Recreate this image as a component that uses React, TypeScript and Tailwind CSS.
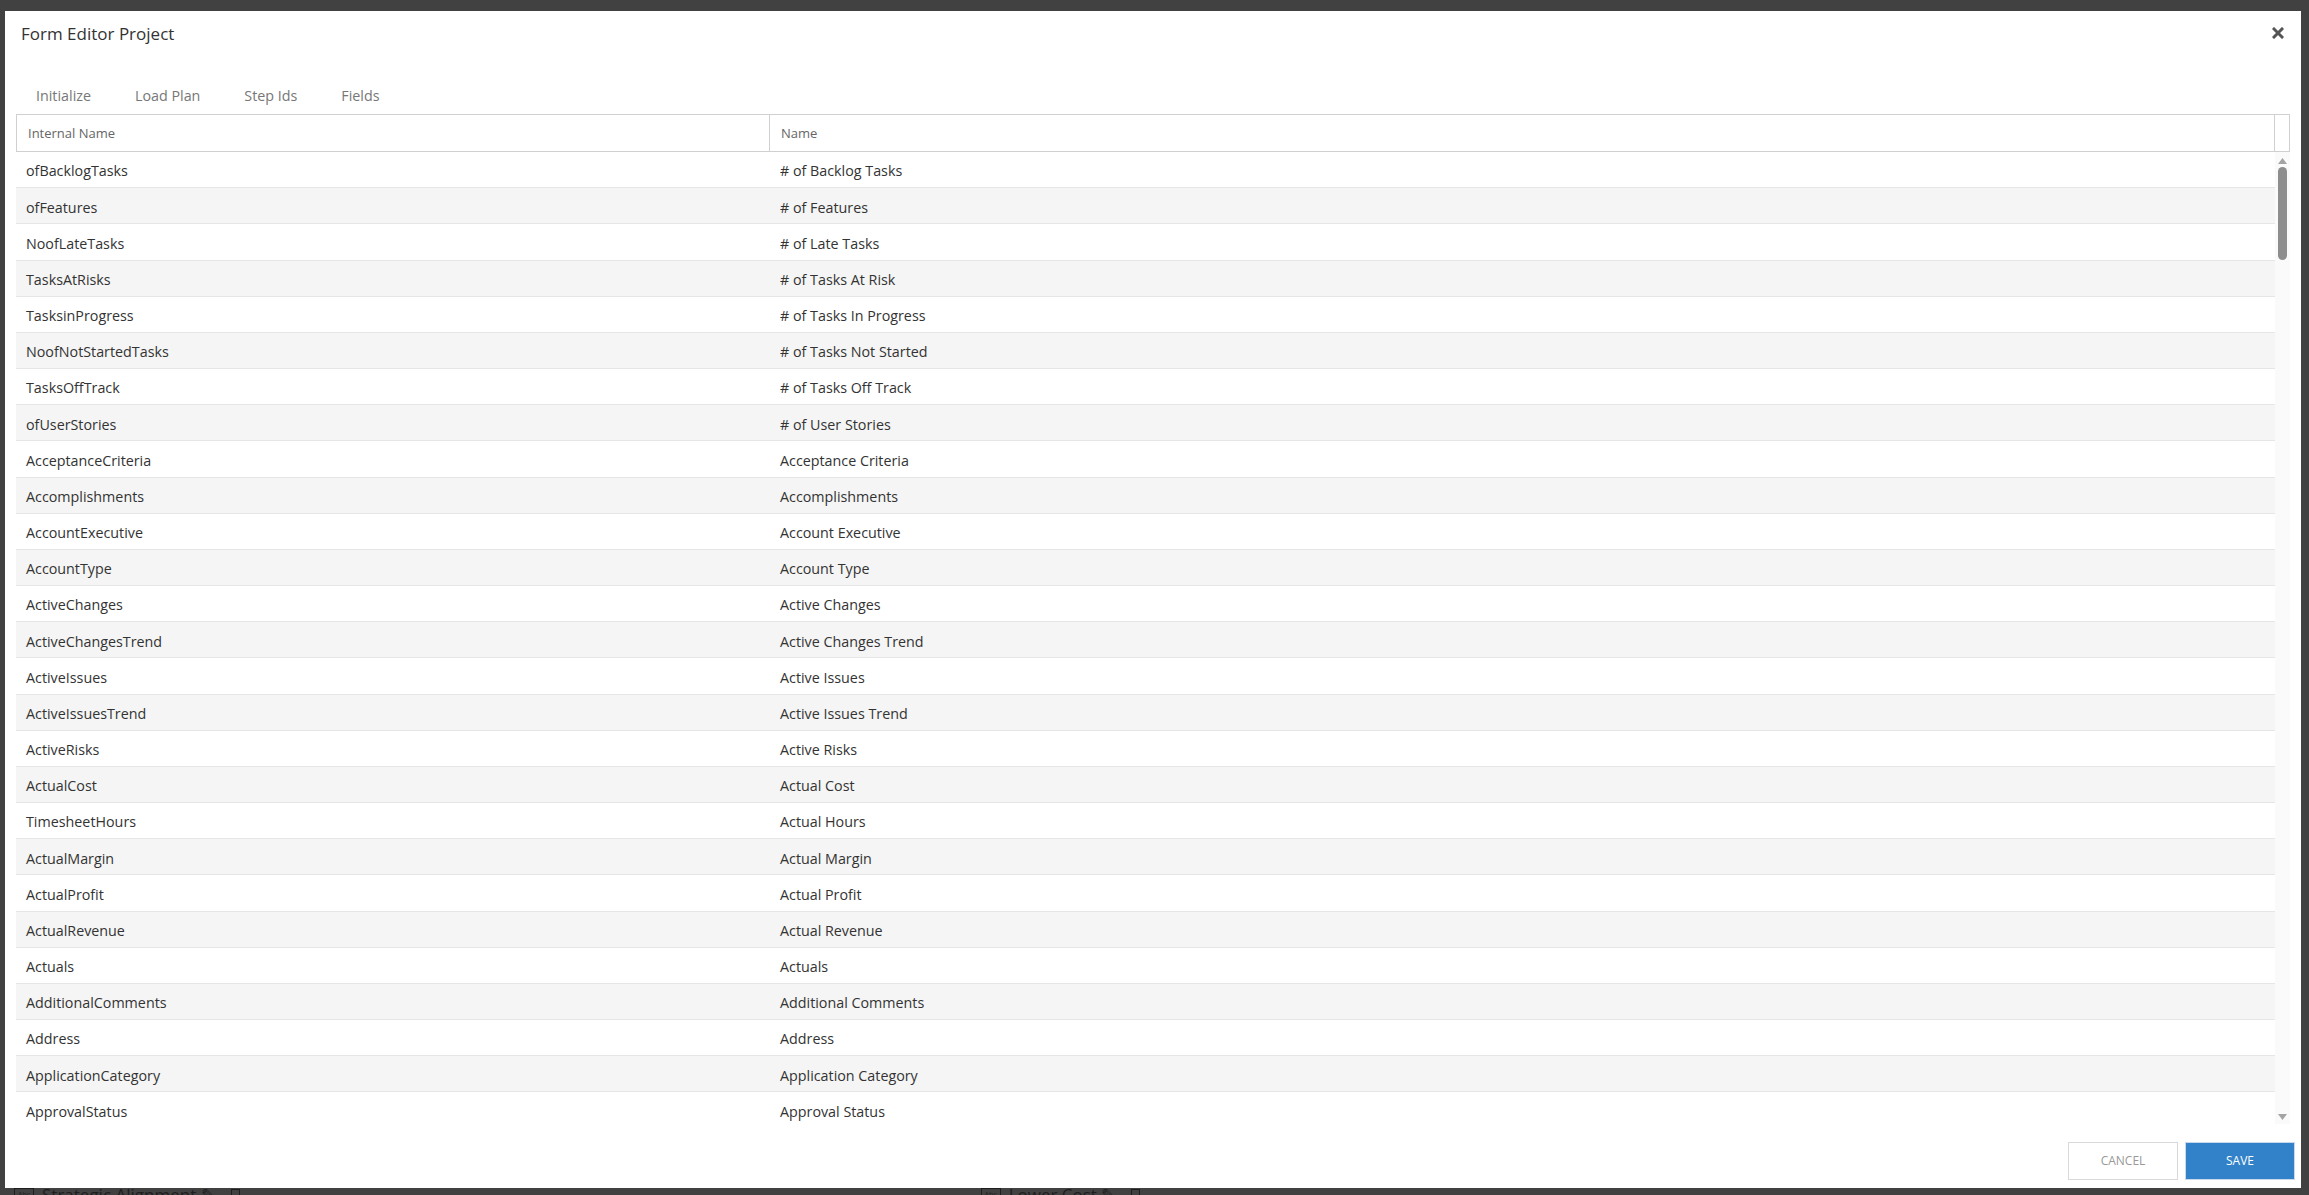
import React from "react";

const rows: [string, string][] = [
  ["ofBacklogTasks", "# of Backlog Tasks"],
  ["ofFeatures", "# of Features"],
  ["NoofLateTasks", "# of Late Tasks"],
  ["TasksAtRisks", "# of Tasks At Risk"],
  ["TasksinProgress", "# of Tasks In Progress"],
  ["NoofNotStartedTasks", "# of Tasks Not Started"],
  ["TasksOffTrack", "# of Tasks Off Track"],
  ["ofUserStories", "# of User Stories"],
  ["AcceptanceCriteria", "Acceptance Criteria"],
  ["Accomplishments", "Accomplishments"],
  ["AccountExecutive", "Account Executive"],
  ["AccountType", "Account Type"],
  ["ActiveChanges", "Active Changes"],
  ["ActiveChangesTrend", "Active Changes Trend"],
  ["ActiveIssues", "Active Issues"],
  ["ActiveIssuesTrend", "Active Issues Trend"],
  ["ActiveRisks", "Active Risks"],
  ["ActualCost", "Actual Cost"],
  ["TimesheetHours", "Actual Hours"],
  ["ActualMargin", "Actual Margin"],
  ["ActualProfit", "Actual Profit"],
  ["ActualRevenue", "Actual Revenue"],
  ["Actuals", "Actuals"],
  ["AdditionalComments", "Additional Comments"],
  ["Address", "Address"],
  ["ApplicationCategory", "Application Category"],
  ["ApprovalStatus", "Approval Status"],
];

const tabs = ["Initialize", "Load Plan", "Step Ids", "Fields"];

export default function App() {
  return (
    <div
      className="relative w-[2309px] h-[1195px] overflow-hidden bg-[#414141]"
      style={{ fontFamily: '"Open Sans", "Noto Sans", sans-serif' }}
    >
      {/* underlying page (dimmed) */}
      <div className="absolute left-0 right-0 bottom-0 h-[40px] flex items-end text-[#1e1e1e] text-[17px]">
        <div className="flex items-center gap-2 ml-[14px] -mb-[12px]">
          <span className="inline-block w-[20px] h-[13px] border border-[#1e1e1e] text-[7px] leading-[11px] text-center">Abc</span>
          <span>Strategic Alignment ✎</span>
          <span className="inline-block w-[9px] h-[11px] border border-[#1e1e1e] ml-2" />
        </div>
        <div className="flex items-center gap-2 ml-[741px] -mb-[12px]">
          <span className="inline-block w-[20px] h-[13px] border border-[#1e1e1e] text-[7px] leading-[11px] text-center">Abc</span>
          <span>Lower Cost ✎</span>
          <span className="inline-block w-[9px] h-[11px] border border-[#1e1e1e] ml-2" />
        </div>
      </div>

      {/* modal */}
      <div className="absolute left-[5px] top-[11px] w-[2296px] h-[1177px] bg-white flex flex-col">
        <div className="h-[46px] flex items-center justify-between pl-[16px] pr-[17px]">
          <span className="text-[17px] text-[#333]">Form Editor Project</span>
          <svg width="12" height="12" viewBox="0 0 12 12" className="mt-[-2px]">
            <path d="M2 2 L10 10 M10 2 L2 10" stroke="#555" strokeWidth="3" strokeLinecap="square" />
          </svg>
        </div>

        <div className="mt-[21px] h-[36px] flex items-center pl-[9px]">
          {tabs.map((t) => (
            <div key={t} className="px-[22px] text-[14.3px] text-[#777]">
              {t}
            </div>
          ))}
        </div>

        <div className="mx-[11px] flex flex-col">
          <div className="flex h-[38px] border border-[#d0d0d0] text-[13px] text-[#666]">
            <div className="w-[753px] border-r border-[#d0d0d0] flex items-center pl-[11px] pt-[1px]">Internal Name</div>
            <div className="flex-1 border-r border-[#d0d0d0] flex items-center pl-[11px] pt-[1px]">Name</div>
            <div className="w-[14px]" />
          </div>
          <div className="flex h-[972px]">
            <div className="flex-1 flex flex-col overflow-hidden">
              {rows.map(([a, b], i) => (
                <div
                  key={a}
                  className={`flex h-[36.18px] shrink-0 items-center border-b border-[#e6e6e6] text-[14.3px] text-[#333] pt-[3px] ${
                    i % 2 === 1 ? "bg-[#f5f5f5]" : "bg-white"
                  }`}
                >
                  <div className="w-[753px] pl-[10px]">{a}</div>
                  <div className="flex-1 pl-[11px]">{b}</div>
                </div>
              ))}
            </div>
            <div className="w-[15px] bg-[#fafafa] flex flex-col items-center pt-[6px] pb-[4px]">
              <svg width="9" height="6" viewBox="0 0 9 6">
                <path d="M0 6 L4.5 0 L9 6 Z" fill="#a3a3a3" />
              </svg>
              <div className="mt-[3px] w-[9px] h-[93px] rounded-full bg-[#8d8d8d]" />
              <div className="flex-1" />
              <svg width="9" height="6" viewBox="0 0 9 6">
                <path d="M0 0 L9 0 L4.5 6 Z" fill="#a3a3a3" />
              </svg>
            </div>
          </div>
        </div>

        <div className="mt-[18px] flex justify-end gap-[7px] pr-[6px]">
          <button className="w-[110px] h-[38px] border border-[#d9d9d9] bg-white text-[12px] text-[#999]">CANCEL</button>
          <button className="w-[110px] h-[38px] border border-[#c9d9ea] bg-[#3182c8] text-[12px] text-white">SAVE</button>
        </div>
      </div>
    </div>
  );
}
